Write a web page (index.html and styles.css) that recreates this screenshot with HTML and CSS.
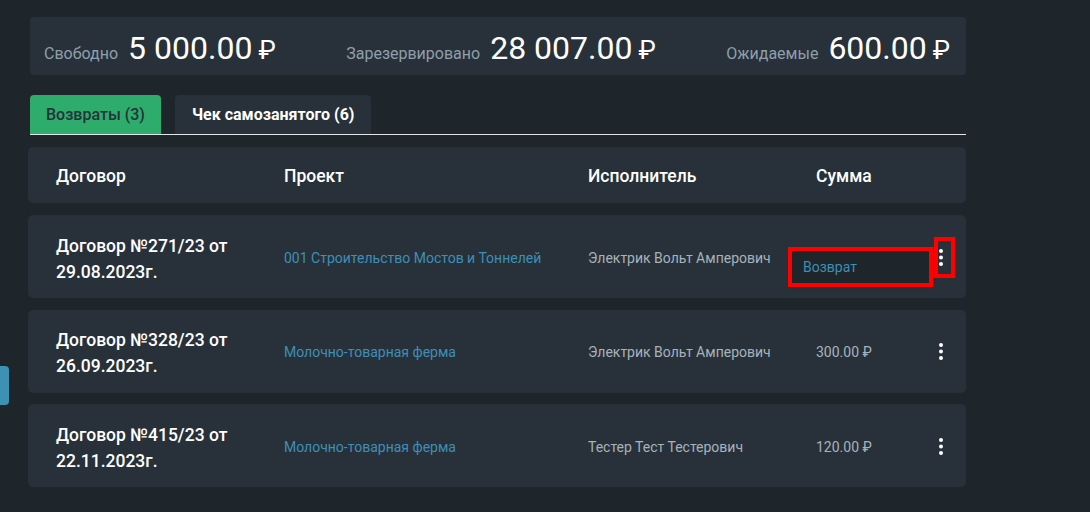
FILE: index.html
```html
<!DOCTYPE html>
<html lang="ru">
<head>
<meta charset="utf-8">
<title>Возвраты</title>
<link rel="stylesheet" href="styles.css">
</head>
<body>
<div class="side-tab"></div>
<main class="wrap">
  <section class="summary">
    <div class="sum-item"><span class="sum-label">Свободно</span><span class="sum-value">5 000.00</span><span class="rub">₽</span></div>
    <div class="sum-item"><span class="sum-label">Зарезервировано</span><span class="sum-value">28 007.00</span><span class="rub">₽</span></div>
    <div class="sum-item"><span class="sum-label">Ожидаемые</span><span class="sum-value">600.00</span><span class="rub">₽</span></div>
  </section>

  <nav class="tabs">
    <div class="tab active">Возвраты (3)</div>
    <div class="tab">Чек самозанятого (6)</div>
  </nav>

  <div class="table">
    <div class="row head">
      <div>Договор</div>
      <div>Проект</div>
      <div>Исполнитель</div>
      <div>Сумма</div>
      <div></div>
    </div>

    <div class="row">
      <div class="contract">Договор №271/23 от<br>29.08.2023г.</div>
      <div class="project">001 Строительство Мостов и Тоннелей</div>
      <div class="person">Электрик Вольт Амперович</div>
      <div class="amount"></div>
      <div class="menu"><svg width="4" height="18" viewBox="0 0 4 18"><circle cx="2" cy="2" r="2"/><circle cx="2" cy="8.5" r="2"/><circle cx="2" cy="15" r="2"/></svg></div>
      <div class="popup">Возврат</div>
      <div class="mark mark-popup"></div>
      <div class="mark mark-dots"></div>
    </div>

    <div class="row">
      <div class="contract">Договор №328/23 от<br>26.09.2023г.</div>
      <div class="project">Молочно-товарная ферма</div>
      <div class="person">Электрик Вольт Амперович</div>
      <div class="amount">300.00 ₽</div>
      <div class="menu"><svg width="4" height="18" viewBox="0 0 4 18"><circle cx="2" cy="2" r="2"/><circle cx="2" cy="8.5" r="2"/><circle cx="2" cy="15" r="2"/></svg></div>
    </div>

    <div class="row">
      <div class="contract">Договор №415/23 от<br>22.11.2023г.</div>
      <div class="project">Молочно-товарная ферма</div>
      <div class="person">Тестер Тест Тестерович</div>
      <div class="amount">120.00 ₽</div>
      <div class="menu"><svg width="4" height="18" viewBox="0 0 4 18"><circle cx="2" cy="2" r="2"/><circle cx="2" cy="8.5" r="2"/><circle cx="2" cy="15" r="2"/></svg></div>
    </div>
  </div>
</main>
</body>
</html>
```

FILE: styles.css
```css
* { box-sizing: border-box; }
html, body { margin: 0; padding: 0; }
body {
  background: #1e252b;
  font-family: Roboto, "Liberation Sans", sans-serif;
  color: #fff;
  width: 1090px;
  height: 512px;
  overflow: hidden;
  position: relative;
}
.side-tab {
  position: absolute;
  left: 0;
  top: 366px;
  width: 9px;
  height: 39px;
  background: #3d92b3;
  border-radius: 0 4px 4px 0;
}
.wrap {
  margin-left: 28px;
  width: 938px;
  padding-top: 17px;
}
.summary {
  margin-left: 2px;
  width: 936px;
  height: 58px;
  background: #28313a;
  border-radius: 4px;
  display: flex;
  justify-content: space-between;
  align-items: baseline;
  padding: 12px 16px 0 14px;
}
.sum-item { display: flex; align-items: baseline; white-space: nowrap; }
.sum-label { font-size: 16px; color: #8e9fab; margin-right: 10px; }
.sum-value { font-size: 32px; color: #fff; }
.rub { font-size: 26px; margin-left: 6px; color: #fff; }

.tabs {
  margin-left: 2px;
  margin-top: 20px;
  width: 936px;
  display: flex;
  gap: 14px;
  border-bottom: 1px solid #e2e6e9;
}
.tab {
  height: 39px;
  padding: 0 17px;
  display: flex;
  align-items: center;
  background: #28313a;
  border-radius: 4px 4px 0 0;
  font-size: 16px;
  font-weight: 700;
  color: #fff;
}
.tab.active {
  background: #2eac6c;
  color: #24323a;
  font-weight: 500;
  padding: 0 16px;
}

.table {
  margin-top: 12px;
  display: flex;
  flex-direction: column;
  gap: 11.5px;
}
.row {
  position: relative;
  display: grid;
  grid-template-columns: 228px 304px 228px 1fr 30px;
  align-items: center;
  height: 83px;
  padding-left: 28px;
  padding-right: 10px;
  padding-top: 2px;
  background: #28313a;
  border-radius: 5px;
}
.row.head {
  height: 56px;
  font-size: 17.5px;
  font-weight: 500;
  color: #fff;
  margin-bottom: 0.5px;
  padding-top: 2px;
}
.contract {
  font-size: 17.5px;
  font-weight: 500;
  line-height: 26px;
  color: #fff;
  padding-top: 2px;
}
.project { font-size: 14px; color: #3d8fb6; }
.person { font-size: 14px; color: #a7b3bc; }
.amount { font-size: 14px; color: #a7b3bc; }
.menu { display: flex; justify-content: center; }
.menu svg { fill: #fff; display: block; }

.popup {
  position: absolute;
  left: 763px;
  top: 35px;
  width: 139px;
  height: 34px;
  background: #1e252b;
  color: #3d8fb6;
  font-size: 14px;
  display: flex;
  align-items: center;
  padding-left: 12px;
  box-shadow: 0 2px 4px rgba(0,0,0,0.35);
}
.mark {
  position: absolute;
  border: 4px solid #ff0000;
}
.mark-popup {
  left: 760px;
  top: 32px;
  width: 145px;
  height: 40px;
}
.mark-dots {
  left: 906px;
  top: 22px;
  width: 21px;
  height: 41px;
}
```
